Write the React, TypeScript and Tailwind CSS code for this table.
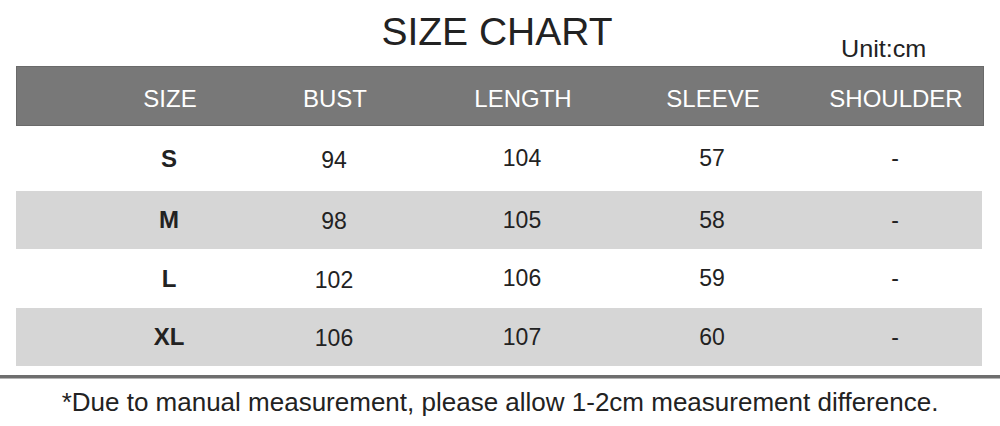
const headers = ["SIZE", "BUST", "LENGTH", "SLEEVE", "SHOULDER"];

const rows = [
  { size: "S", bust: "94", length: "104", sleeve: "57", shoulder: "-", h: "h-[65px]", shade: false },
  { size: "M", bust: "98", length: "105", sleeve: "58", shoulder: "-", h: "h-[58px]", shade: true },
  { size: "L", bust: "102", length: "106", sleeve: "59", shoulder: "-", h: "h-[59px]", shade: false },
  { size: "XL", bust: "106", length: "107", sleeve: "60", shoulder: "-", h: "h-[58px]", shade: true },
];

const cols = "grid grid-cols-[144px_186px_190px_190px_176px] pl-[81px]";

const App = () => {
  return (
    <div className="w-[1000px] h-[426px] bg-white text-[#222] overflow-hidden font-['Liberation_Sans',Arial,sans-serif]">
      {/* title */}
      <div className="relative h-[66px]">
        <h1 className="pt-[8px] text-center text-[39px] leading-[48px] pr-[6px]">SIZE CHART</h1>
        <span className="absolute right-[74px] top-[35px] text-[24px] leading-[28px] scale-x-[1.05] origin-right">Unit:cm</span>
      </div>

      <div className="ml-[16px] w-[968px]">
        <div className={`${cols} h-[60px] items-center bg-[#787878] border border-[#6a6a6a] pt-[6px] text-white text-[24px]`}>
          {headers.map((h) => (
            <div key={h} className="text-center">{h}</div>
          ))}
        </div>

        {rows.map((r) => (
          <div
            key={r.size}
            className={`${cols} ${r.h} items-center w-[966px] text-[23px] ${r.shade ? "bg-[#d6d6d6]" : "bg-white"}`}
          >
            <div className="text-center font-bold text-[24px]">{r.size}</div>
            <div className="text-center pt-[3px]">{r.bust}</div>
            <div className="text-center">{r.length}</div>
            <div className="text-center">{r.sleeve}</div>
            <div className="text-center">{r.shoulder}</div>
          </div>
        ))}
      </div>

      <div className="mt-[9px] h-[4px] bg-[#6e6e6e] border-b border-[#b5b5b5]" />

      <p className="pt-[8px] text-center text-[26px] leading-[30px]">
        *Due to manual measurement, please allow 1-2cm measurement difference.
      </p>
    </div>
  );
};

export default App;
